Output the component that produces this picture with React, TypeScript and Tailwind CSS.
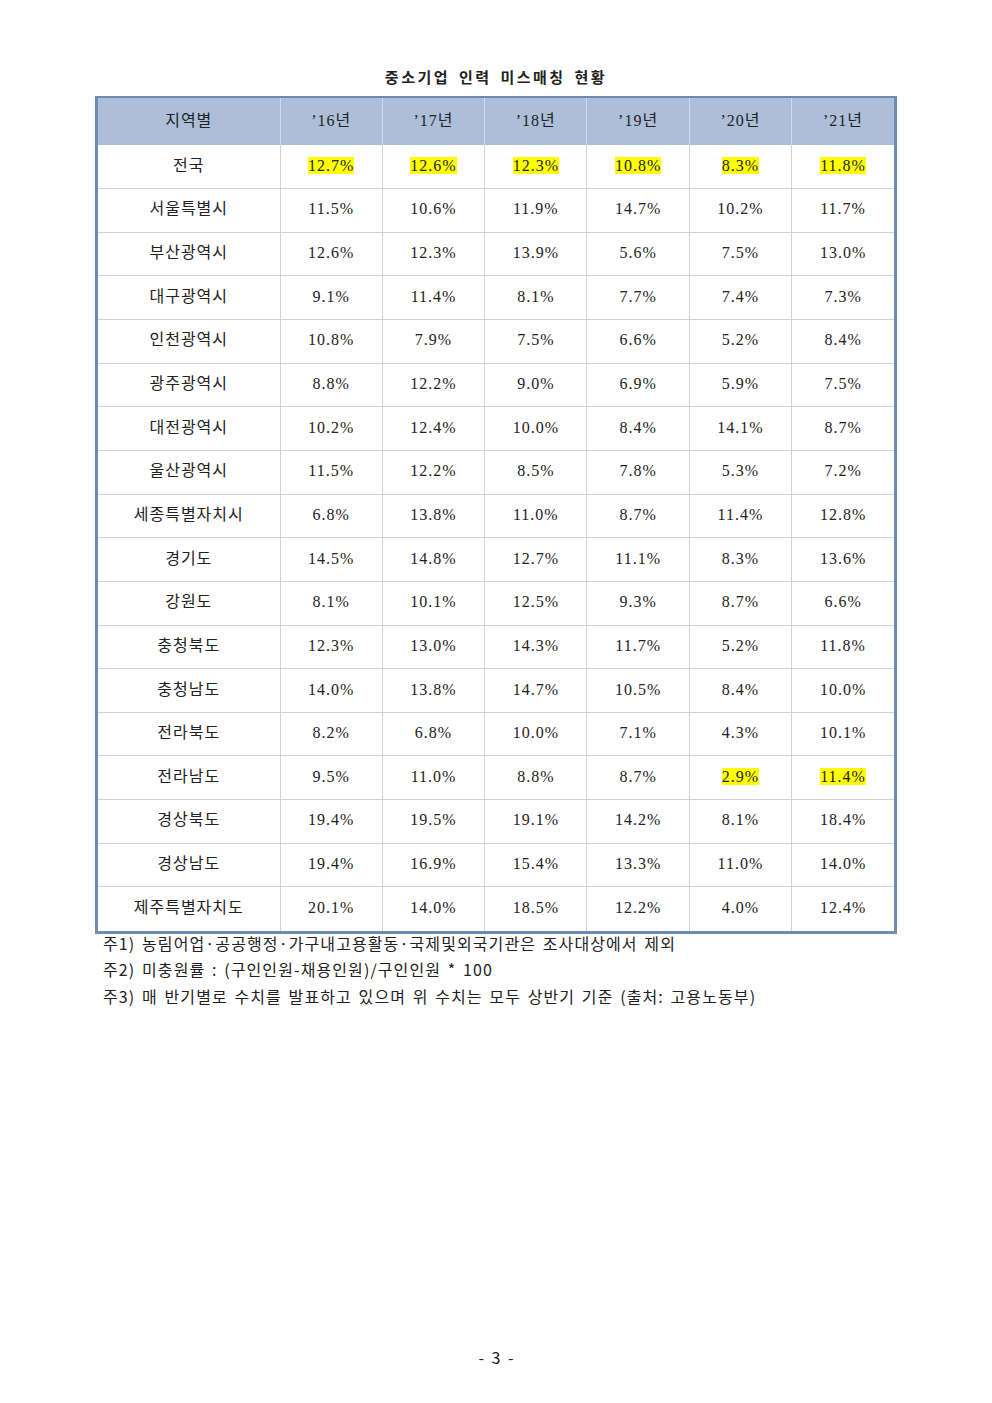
const rows: [string, string[], number[]?][] = [
  ["전국", ["12.7%", "12.6%", "12.3%", "10.8%", "8.3%", "11.8%"], [0, 1, 2, 3, 4, 5]],
  ["서울특별시", ["11.5%", "10.6%", "11.9%", "14.7%", "10.2%", "11.7%"]],
  ["부산광역시", ["12.6%", "12.3%", "13.9%", "5.6%", "7.5%", "13.0%"]],
  ["대구광역시", ["9.1%", "11.4%", "8.1%", "7.7%", "7.4%", "7.3%"]],
  ["인천광역시", ["10.8%", "7.9%", "7.5%", "6.6%", "5.2%", "8.4%"]],
  ["광주광역시", ["8.8%", "12.2%", "9.0%", "6.9%", "5.9%", "7.5%"]],
  ["대전광역시", ["10.2%", "12.4%", "10.0%", "8.4%", "14.1%", "8.7%"]],
  ["울산광역시", ["11.5%", "12.2%", "8.5%", "7.8%", "5.3%", "7.2%"]],
  ["세종특별자치시", ["6.8%", "13.8%", "11.0%", "8.7%", "11.4%", "12.8%"]],
  ["경기도", ["14.5%", "14.8%", "12.7%", "11.1%", "8.3%", "13.6%"]],
  ["강원도", ["8.1%", "10.1%", "12.5%", "9.3%", "8.7%", "6.6%"]],
  ["충청북도", ["12.3%", "13.0%", "14.3%", "11.7%", "5.2%", "11.8%"]],
  ["충청남도", ["14.0%", "13.8%", "14.7%", "10.5%", "8.4%", "10.0%"]],
  ["전라북도", ["8.2%", "6.8%", "10.0%", "7.1%", "4.3%", "10.1%"]],
  ["전라남도", ["9.5%", "11.0%", "8.8%", "8.7%", "2.9%", "11.4%"], [4, 5]],
  ["경상북도", ["19.4%", "19.5%", "19.1%", "14.2%", "8.1%", "18.4%"]],
  ["경상남도", ["19.4%", "16.9%", "15.4%", "13.3%", "11.0%", "14.0%"]],
  ["제주특별자치도", ["20.1%", "14.0%", "18.5%", "12.2%", "4.0%", "12.4%"]],
]

const years = ["’16년", "’17년", "’18년", "’19년", "’20년", "’21년"]

const cellFont = { fontFamily: '"Liberation Serif", "Noto Sans CJK KR", serif' }

export default function App() {
  return (
    <div className="min-h-[1403px] w-[992px] bg-white text-[#222]" style={{ fontFamily: '"Noto Sans CJK KR", sans-serif' }}>
      <div className="pt-[66px] text-center text-[15px] font-bold tracking-[2.5px] leading-[22px] [word-spacing:3px]">
        중소기업 인력 미스매칭 현황
      </div>

      <div className="mx-auto mt-[8px] w-[802px] border-x-[3px] border-b-[3px] border-t-2 border-[#6f8bb0]">
        <table className="w-full table-fixed border-collapse text-[16px] tracking-[1px]" style={cellFont}>
          <colgroup>
            <col className="w-[182px]" />
            {years.map((y) => (
              <col key={y} />
            ))}
          </colgroup>
          <thead>
            <tr className="h-[47px] bg-[#adbfd8]">
              <th className="border-r border-[#d2dae6] pb-[2px] font-normal">지역별</th>
              {years.map((y, i) => (
                <th key={y} className={`pb-[2px] font-normal ${i < 5 ? "border-r border-[#d2dae6]" : ""}`}>
                  {y}
                </th>
              ))}
            </tr>
          </thead>
          <tbody>
            {rows.map(([region, vals, marks], r) => (
              <tr key={region} className={`h-[43.65px] ${r > 0 ? "border-t border-[#cdd2da]" : ""}`}>
                <td className="border-r border-[#cdd2da] pb-[2px] text-center">{region}</td>
                {vals.map((v, i) => (
                  <td key={i} className={`pb-[2px] text-center ${i < 5 ? "border-r border-[#cdd2da]" : ""}`}>
                    {marks && marks.includes(i) ? <span className="bg-[#ffff00]">{v}</span> : v}
                  </td>
                ))}
              </tr>
            ))}
          </tbody>
        </table>
      </div>

      <div className="ml-[103px] -mt-[4px] text-[16px] leading-[26.5px] tracking-[1.1px] [word-spacing:2px]">
        <p>주1) 농림어업·공공행정·가구내고용활동·국제및외국기관은 조사대상에서 제외</p>
        <p>주2) 미충원률 : (구인인원-채용인원)/구인인원 * 100</p>
        <p>주3) 매 반기별로 수치를 발표하고 있으며 위 수치는 모두 상반기 기준 (출처: 고용노동부)</p>
      </div>

      <div className="mt-[338px] text-center text-[16px] leading-[20px] [word-spacing:4px]">- 3 -</div>
    </div>
  )
}
